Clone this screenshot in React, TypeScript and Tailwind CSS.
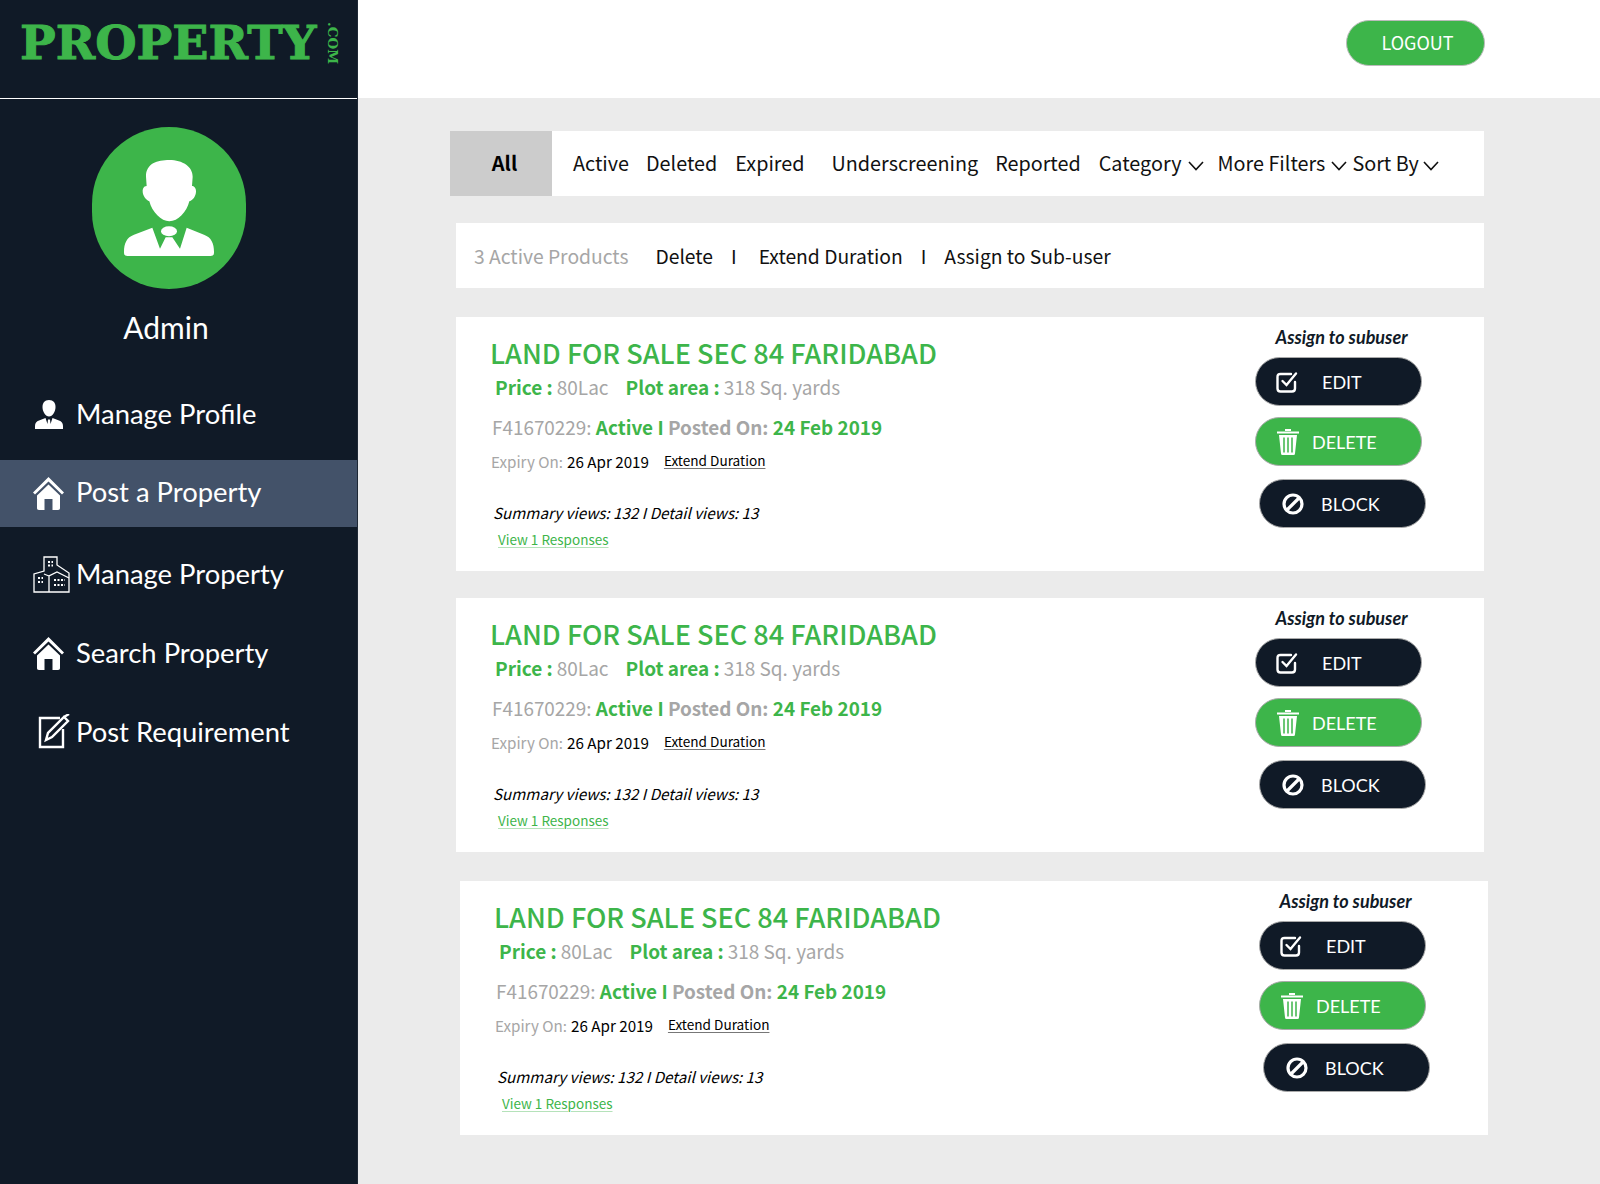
import React from 'react';

const NOTO = '[font-family:"Noto_Sans_CJK_JP","Noto_Sans",sans-serif]';

function AvatarIcon() {
  return (
    <svg width="90" height="96" viewBox="0 0 270 288" fill="#fff">
      <path d="M136 0C100 0 66 10 66 50L68 78C58 78 56 88 56 94C56 108 66 120 76 124C84 156 112 184 136 184C162 184 188 156 196 124C208 120 216 108 216 94C216 86 212 78 204 78L206 50C206 20 176 0 136 0Z" />
      <path d="M0 275C0 250 8 232 30 224L85 203L108 266L125 232H145L168 266L188 203L240 224C262 232 270 250 270 275V278Q270 288 260 288H10Q0 288 0 278Z" />
      <ellipse cx="135" cy="214" rx="24" ry="15" />
    </svg>
  );
}

function ProfileIcon() {
  return (
    <svg width="28" height="29" viewBox="0 0 28 29" fill="#fff">
      <path d="M14 0C9.500 0 7.500 3 7.500 7C7.500 11.500 10.500 16.500 14 16.500C17.500 16.500 20.500 11.500 20.500 7C20.500 3 18.500 0 14 0Z" />
      <path d="M0 26C0 23 1.500 21.500 4 20.500L10.500 18L12.500 24L13 19.500H15L15.500 24L17.500 18L24 20.500C26.500 21.500 28 23 28 26V29H0Z" />
    </svg>
  );
}

function HomeIcon() {
  return (
    <svg width="31" height="33" viewBox="0 0 31 33" fill="#fff">
      <path d="M15.500 0L31 15.500L29 17.500L15.500 4.500L2 17.500L0 15.500Z" />
      <path d="M15.500 7.500L27 18.500V31C27 32 26.500 33 25 33H19.500V22H11.500V33H6C4.500 33 4 32 4 31V18.500Z" />
    </svg>
  );
}

function BuildingIcon() {
  return (
    <svg width="37" height="37" viewBox="0 0 37 37" fill="none" stroke="#fff" strokeWidth="1.300">
      <path d="M1 36V18L11 15V1H24V9L36 17V36Z" />
      <path d="M16 36V20L24 16L36 22M16 20L11 18" />
      <path d="M15 6H20M15 9.500H20M5 22H10M5 26H10M21 24H32M21 29H32" strokeWidth="2.200" strokeDasharray="2 1.500" />
    </svg>
  );
}

function PostIcon() {
  return (
    <svg width="33" height="35" viewBox="0 0 33 35" fill="none" stroke="#fff" strokeWidth="2.400">
      <path d="M22 4H2V33H25V15" />
      <path d="M8 26L10 19L26 3L30 7L14 23Z" />
      <path d="M26 3L31 0" />
    </svg>
  );
}

function EditIcon() {
  return (
    <svg width="22" height="22" viewBox="0 0 22 22" fill="none" stroke="#fff" strokeWidth="2.400" strokeLinecap="round">
      <path d="M15 3H4.500Q1.500 3 1.500 6V17.500Q1.500 20.500 4.500 20.500H16Q19 20.500 19 17.500V11" />
      <path d="M6.500 10L10.500 14L20 2.500" />
    </svg>
  );
}

function TrashIcon() {
  return (
    <svg width="22" height="27" viewBox="0 0 22 27" fill="#fff">
      <path d="M0 3.500H22V5.500H0ZM8 1H14V3H8Z" />
      <path d="M2 7H20L18 25.500Q18 27 16.500 27H5.500Q4 27 4 25.500Z" />
      <path d="M7 9.500V24.500M11 9.500V24.500M15 9.500V24.500" stroke="#3db54a" strokeWidth="1.500" />
    </svg>
  );
}

function BlockIcon() {
  return (
    <svg width="22" height="22" viewBox="0 0 22 22" fill="none" stroke="#fff" strokeWidth="3.200">
      <circle cx="11" cy="11" r="9" />
      <path d="M5 17L17 5" />
    </svg>
  );
}

function Chevron() {
  return (
    <svg width="16" height="10" viewBox="0 0 16 10" fill="none" stroke="#111" strokeWidth="1.600" className="shrink-0">
      <path d="M1 1L8 8.500L15 1" />
    </svg>
  );
}

const NAV = [
  { label: 'Manage Profile', icon: <ProfileIcon />, active: false, mt: 'mt-[0px]', iconBox: 'pl-[35px]', pb: 'pb-[2px]' },
  { label: 'Post a Property', icon: <HomeIcon />, active: true, mt: 'mt-[12px]', iconBox: 'pl-[33px]', pb: 'pb-[4px]' },
  { label: 'Manage Property', icon: <BuildingIcon />, active: false, mt: 'mt-[14px]', iconBox: 'pl-[33px]', pb: 'pb-[2px]' },
  { label: 'Search Property', icon: <HomeIcon />, active: false, mt: 'mt-[12px]', iconBox: 'pl-[33px]', pb: 'pb-[2px]' },
  { label: 'Post Requirement', icon: <PostIcon />, active: false, mt: 'mt-[11px]', iconBox: 'pl-[38px]', pb: 'pb-[0px]' },
];

function Sidebar() {
  return (
    <aside className="w-[358px] shrink-0 h-[1184px] bg-[#101a27] border-r border-[#1e2835]">
      <div className="h-[99px] border-b border-white flex items-start pl-[20px] pt-[17px]">
        <span className="[font-family:'DejaVu_Serif',serif] font-bold text-[47.500px] leading-[50px] text-[#3db54a] [-webkit-text-stroke:1px_#3db54a]">PROPERTY</span>
        <span className="[font-family:'DejaVu_Serif',serif] font-bold text-[13.500px] leading-[14px] text-[#3db54a] [writing-mode:vertical-rl] ml-[10px] mt-[5px]">.COM</span>
      </div>
      <div className="flex flex-col items-center pr-[20px]">
        <div className="mt-[28px] w-[154px] h-[162px] rounded-full bg-[#3db54a] flex items-center justify-center">
          <AvatarIcon />
        </div>
        <div className="mt-[18px] font-['Lato',sans-serif] text-[30px] leading-[40px] text-white pr-[5px]">Admin</div>
      </div>
      <nav className="mt-[34px]">
        {NAV.map((n) => (
          <div key={n.label} className={`h-[67px] ${n.mt} flex items-center ${n.active ? 'bg-[#435269]' : ''}`}>
            <div className={`w-[76px] shrink-0 ${n.iconBox}`}>{n.icon}</div>
            <span className={`font-['Lato',sans-serif] text-[27.400px] leading-[36px] text-white ${n.pb}`}>{n.label}</span>
          </div>
        ))}
      </nav>
    </aside>
  );
}

function ActionButton({ tone, icon, label, shift, gap, pad }: { tone: 'dark' | 'green'; icon: React.ReactNode; label: string; shift?: string; gap: string; pad: string }) {
  return (
    <div className={`w-[167px] h-[49px] rounded-full border border-[#aaa] flex items-center ${pad} ${shift ?? ''} ${tone === 'dark' ? 'bg-[#101a27]' : 'bg-[#3db54a]'}`}>
      {icon}
      <span className={`${gap} font-['Lato',sans-serif] text-[18px] leading-[24px] text-white`}>{label}</span>
    </div>
  );
}

function Card({ className }: { className: string }) {
  return (
    <div className={`h-[254px] bg-white flex justify-between pr-[58px] ${NOTO} ${className}`}>
      <div className="pl-[34px] pt-[19px]">
        <div className="text-[27.100px] leading-[34px] font-medium text-[#3db54a]">LAND FOR SALE SEC 84 FARIDABAD</div>
        <div className="mt-[3px] pl-[5px] text-[19px] leading-[28px] flex">
          <span className="font-bold text-[#3db54a]">Price :</span>
          <span className="ml-[4px] text-[#a6a6a6]">80Lac</span>
          <span className="ml-[17px] font-bold text-[#3db54a]">Plot area :</span>
          <span className="ml-[4px] text-[#a6a6a6]">318 Sq. yards</span>
        </div>
        <div className="mt-[12px] pl-[2px] text-[18.900px] leading-[28px] font-bold text-[#a6a6a6]">
          <span className="font-normal">F41670229:</span> <span className="text-[#3db54a]">Active I</span> Posted On: <span className="text-[#3db54a]">24 Feb 2019</span>
        </div>
        <div className="mt-[8px] pl-[1px] flex items-start text-[15.200px] leading-[24px]">
          <span className="text-[#a6a6a6]">Expiry On:</span>
          <span className="ml-[4px] text-black">26 Apr 2019</span>
          <span className="ml-[15px] mt-[1px] text-[13.600px] leading-[20px] text-black underline underline-offset-2 decoration-[#777]">Extend Duration</span>
        </div>
        <div className="mt-[27px] pl-[3px] text-[15.200px] leading-[24px] italic text-black">Summary views: 132 I Detail views: 13</div>
        <div className="mt-[5px] pl-[8px] text-[13.500px] leading-[20px] text-[#3db54a] underline underline-offset-2 decoration-[#b5e2ba]">View 1 Responses</div>
      </div>
      <div className="w-[171px] pt-[9px]">
        <div className="w-[173px] text-center font-['Lato',sans-serif] font-bold italic text-[18px] leading-[22px] text-[#101a27]">Assign to subuser</div>
        <div className="mt-[9px]">
          <ActionButton tone="dark" icon={<EditIcon />} label="EDIT" gap="ml-[24px]" pad="pl-[20px]" />
        </div>
        <div className="mt-[11px]">
          <ActionButton tone="green" icon={<TrashIcon />} label="DELETE" gap="ml-[13px]" pad="pl-[21px]" />
        </div>
        <div className="mt-[13px]">
          <ActionButton tone="dark" icon={<BlockIcon />} label="BLOCK" shift="ml-[4px]" gap="ml-[17px]" pad="pl-[22px]" />
        </div>
      </div>
    </div>
  );
}

const TABS = [
  { label: 'Active', ml: 'ml-[21px]' },
  { label: 'Deleted', ml: 'ml-[17px]' },
  { label: 'Expired', ml: 'ml-[18px]' },
  { label: 'Underscreening', ml: 'ml-[27px]' },
  { label: 'Reported', ml: 'ml-[17px]' },
  { label: 'Category', ml: 'ml-[18px]', chevron: 'ml-[6px]' },
  { label: 'More Filters', ml: 'ml-[14px]', chevron: 'ml-[6px]' },
  { label: 'Sort By', ml: 'ml-[5px]', chevron: 'ml-[4px]' },
];

export default function App() {
  return (
    <div className="flex w-[1600px] h-[1184px] overflow-hidden bg-[#ebebeb]">
      <Sidebar />
      <main className="flex-1 min-w-0">
        <header className="h-[98px] bg-white flex items-start justify-end pr-[115px] pt-[20px]">
          <button type="button" className={`w-[139px] h-[46px] rounded-full bg-[#3db54a] border border-[#bbb] text-white text-[18px] leading-[24px] pl-[4px] pb-[3px] ${NOTO}`}>LOGOUT</button>
        </header>
        <div className={`ml-[92px] mt-[33px] w-[1034px] h-[65px] bg-white flex items-center whitespace-nowrap ${NOTO}`}>
          <div className="w-[102px] h-[65px] shrink-0 bg-[#cccccc] flex items-center justify-center text-[20px] font-bold text-black pb-[1px] pl-[7px]">All</div>
          {TABS.map((t) => (
            <div key={t.label} className={`${t.ml} flex items-center text-[19.800px] leading-[28px] text-[#111] pb-[2px]`}>
              {t.label}
              {t.chevron && <span className={`${t.chevron} mt-[7px] flex`}><Chevron /></span>}
            </div>
          ))}
        </div>
        <div className={`ml-[98px] mt-[27px] w-[1028px] h-[65px] bg-white flex items-center pl-[18px] text-[19.300px] leading-[28px] text-[#111] ${NOTO}`}>
          <span className="text-[#a6a6a6]">3 Active Products</span>
          <span className="ml-[27px]">Delete</span>
          <span className="ml-[18px]">I</span>
          <span className="ml-[22px]">Extend Duration</span>
          <span className="ml-[18px]">I</span>
          <span className="ml-[18px]">Assign to Sub-user</span>
        </div>
        <Card className="ml-[98px] mt-[29px] w-[1028px]" />
        <Card className="ml-[98px] mt-[27px] w-[1028px]" />
        <Card className="ml-[102px] mt-[29px] w-[1028px]" />
      </main>
    </div>
  );
}
